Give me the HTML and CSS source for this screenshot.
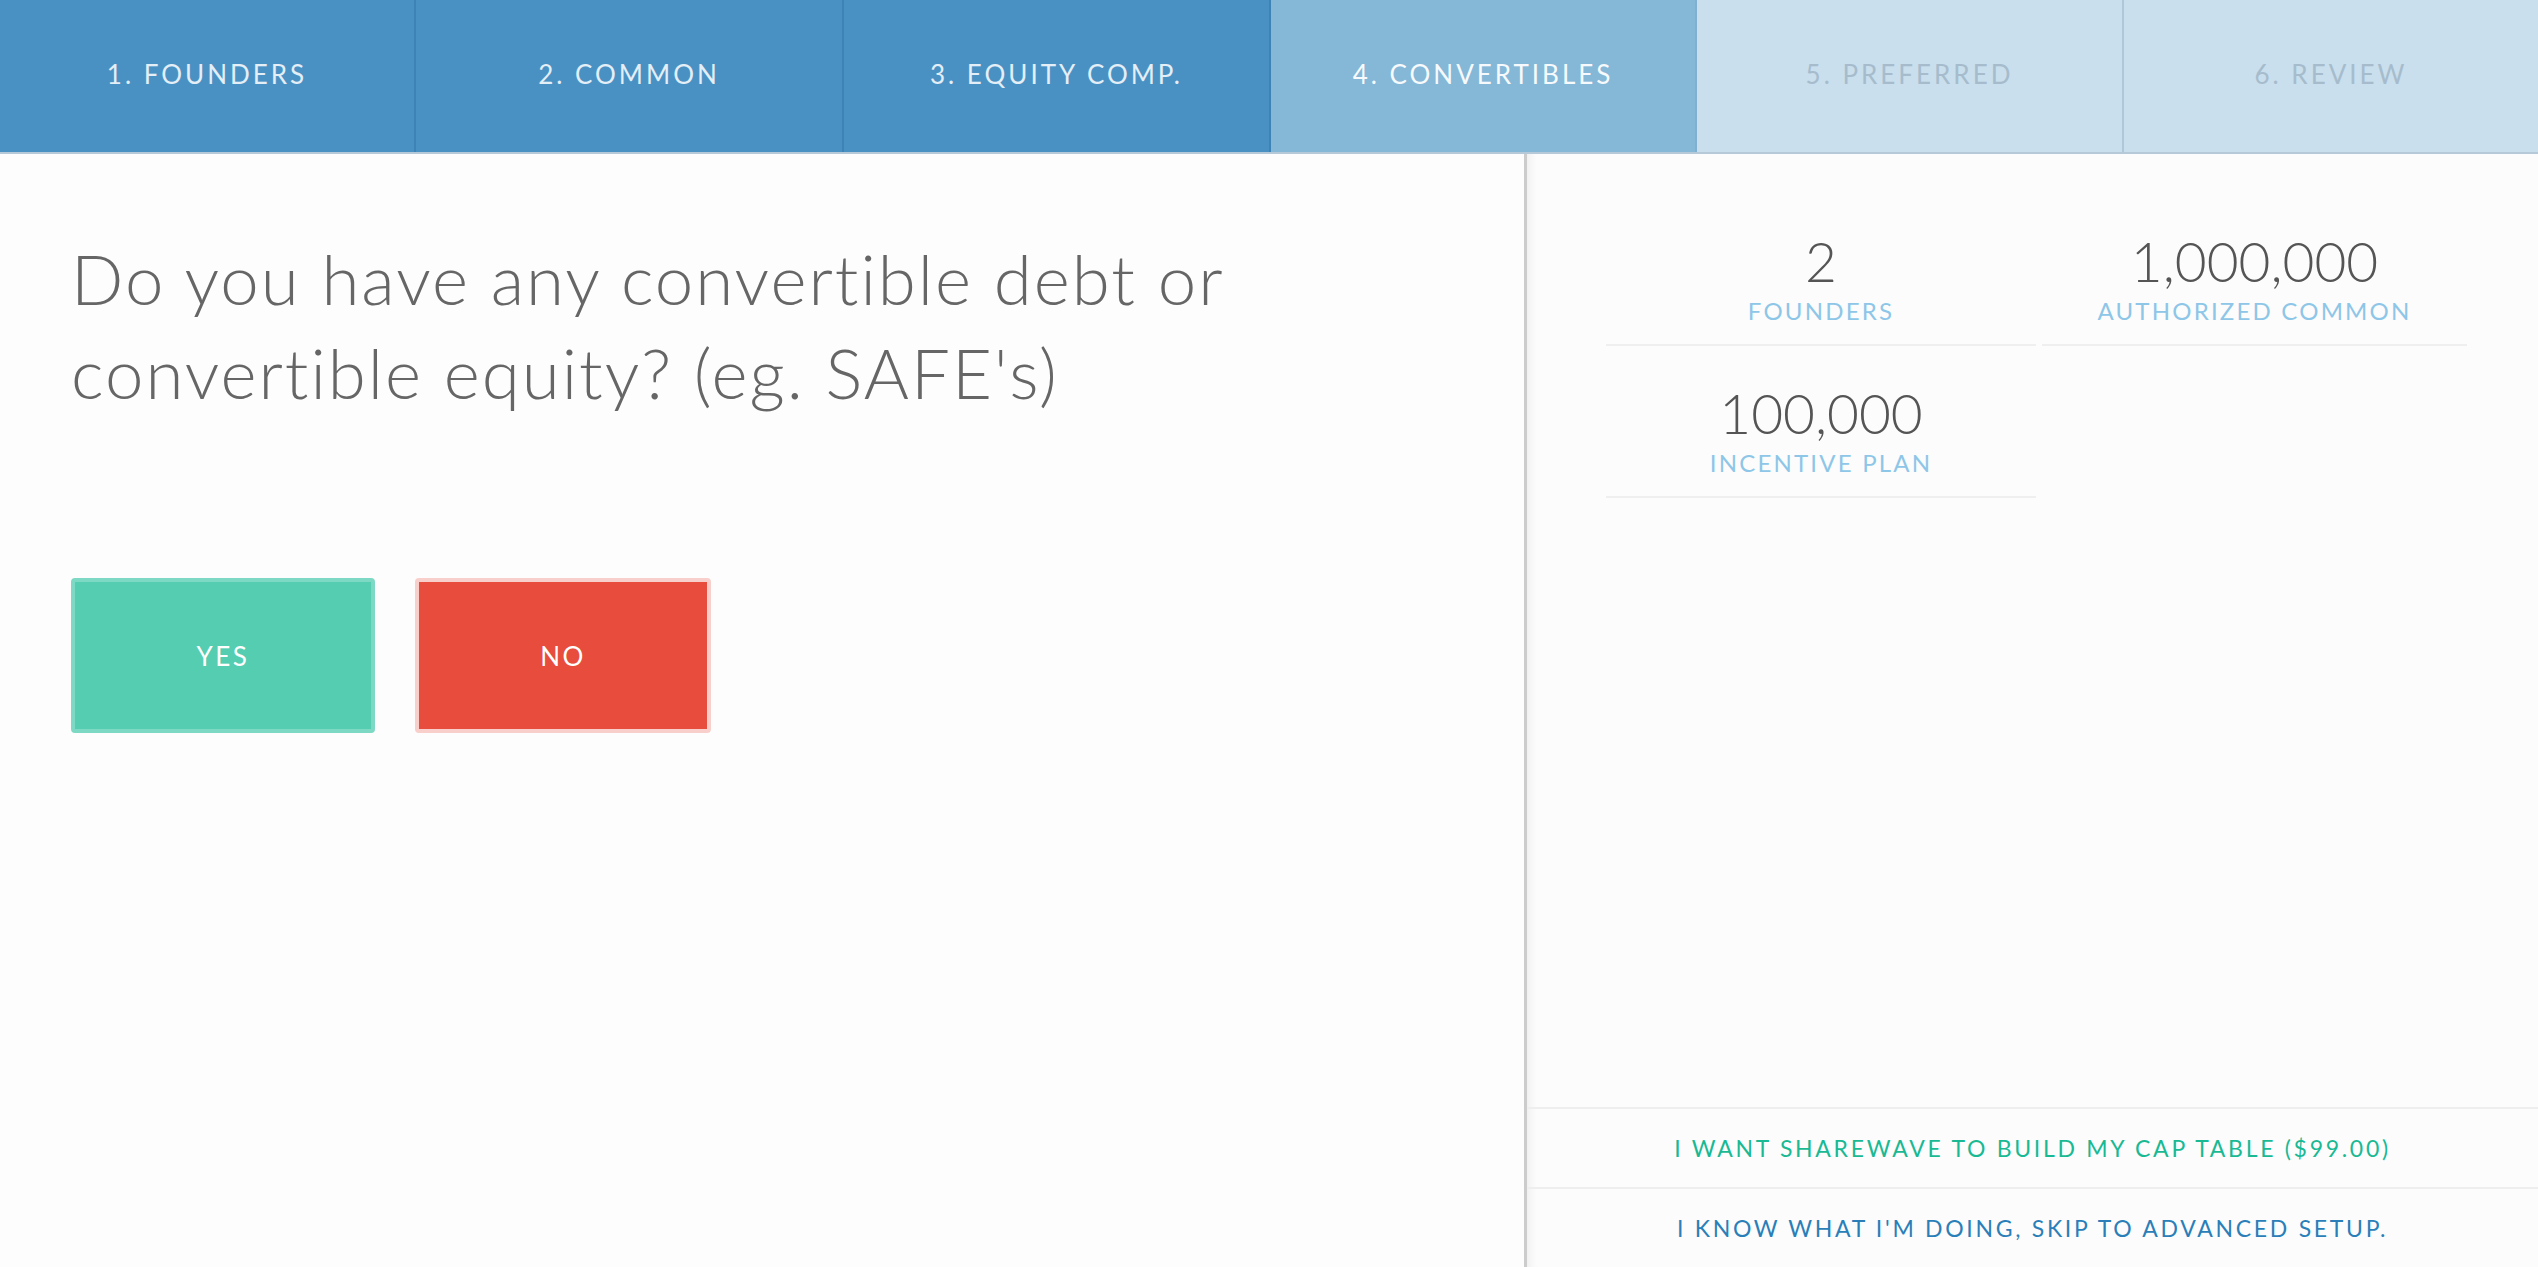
FILE: index.html
```html
<!DOCTYPE html>
<html lang="en">
<head>
<meta charset="utf-8">
<title>Convertibles</title>
<link rel="stylesheet" href="styles.css">
</head>
<body>
<nav class="steps">
  <div class="step done">1. FOUNDERS</div>
  <div class="step done">2. COMMON</div>
  <div class="step done">3. EQUITY COMP.</div>
  <div class="step current">4. CONVERTIBLES</div>
  <div class="step future">5. PREFERRED</div>
  <div class="step future">6. REVIEW</div>
</nav>
<main class="main">
  <section class="question">
    <h1 class="question-title">Do you have any convertible debt or<br>convertible equity? (eg. SAFE's)</h1>
    <div class="answers">
      <button class="answer yes">YES</button>
      <button class="answer no">NO</button>
    </div>
  </section>
  <aside class="summary">
    <div class="stats">
      <div class="stat">
        <div class="stat-value">2</div>
        <div class="stat-label">FOUNDERS</div>
      </div>
      <div class="stat">
        <div class="stat-value">1,000,000</div>
        <div class="stat-label">AUTHORIZED COMMON</div>
      </div>
      <div class="stat">
        <div class="stat-value">100,000</div>
        <div class="stat-label">INCENTIVE PLAN</div>
      </div>
    </div>
    <div class="links">
      <a class="link build">I WANT SHAREWAVE TO BUILD MY CAP TABLE ($99.00)</a>
      <a class="link skip">I KNOW WHAT I'M DOING, SKIP TO ADVANCED SETUP.</a>
    </div>
  </aside>
</main>
</body>
</html>
```
FILE: styles.css
```css
* { box-sizing: border-box; }
html, body { margin: 0; padding: 0; }
body {
  font-family: Lato, "Liberation Sans", sans-serif;
  background: #fdfdfd;
  width: 2538px;
  height: 1267px;
  overflow: hidden;
  display: flex;
  flex-direction: column;
}

.steps {
  display: grid;
  grid-template-columns: 414px 428px 427px 426px 427px 1fr;
  height: 154px;
  border-bottom: 2px solid #b5c9d8;
  flex: none;
}
.step {
  display: flex;
  align-items: center;
  justify-content: center;
  font-size: 26px;
  font-weight: 400;
  letter-spacing: 3px;
  padding-bottom: 4px;
}
.step.done {
  background: #4a91c3;
  color: #e3eef7;
  border-left: 2px solid #3e83b6;
}
.step.done:first-child { border-left: none; }
.step.current {
  background: #85b7d7;
  color: #f7fafc;
  border-left: 2px solid #3e83b6;
}
.step.future {
  background: #c9dfed;
  color: #a6bccc;
  border-left: 2px solid #afc8d9;
}
.step.current + .step.future { border-left: 2px solid #7fb0d2; }

.main {
  flex: 1;
  display: flex;
  min-height: 0;
}
.question {
  width: 1524px;
  flex: none;
  padding: 78px 0 0 71px;
  background: #fdfdfd;
}
.question-title {
  margin: 0;
  font-size: 69px;
  font-weight: 300;
  line-height: 94px;
  color: #666;
  letter-spacing: 2px;
}
.answers {
  display: flex;
  gap: 40px;
  margin-top: 158px;
}
.answer {
  height: 155px;
  border: 4px solid;
  border-radius: 4px;
  font-family: inherit;
  font-size: 26px;
  letter-spacing: 2.5px;
  color: #fff;
  padding: 0;
}
.answer.yes {
  width: 304px;
  background: #54cdb1;
  border-color: #7ed9c4;
}
.answer.no {
  width: 296px;
  background: #e74c3c;
  border-color: #f8cfca;
}

.summary {
  flex: 1;
  border-left: 3px solid #cccccc;
  background: #fcfcfc;
  box-shadow: inset 10px 0 10px -8px rgba(0,0,0,0.07);
  display: flex;
  flex-direction: column;
}
.stats {
  display: grid;
  grid-template-columns: 430px 425px;
  column-gap: 6px;
  padding: 40px 0 0 79px;
}
.stat {
  text-align: center;
  padding: 37px 0 19px;
  border-bottom: 2px solid #efefef;
}
.stat-value {
  font-size: 55px;
  font-weight: 300;
  line-height: 60px;
  color: #555;
}
.stat-label {
  margin-top: 6px;
  font-size: 24px;
  line-height: 28px;
  letter-spacing: 2.2px;
  color: #8ec6e8;
}
.links {
  margin-top: auto;
  display: flex;
  flex-direction: column;
}
.link {
  height: 80px;
  border-top: 2px solid #eeeeee;
  display: flex;
  align-items: center;
  justify-content: center;
  font-size: 23px;
  letter-spacing: 2.7px;
  text-decoration: none;
}
.link.build { color: #19b994; }
.link.skip { color: #2a7fb8; }
```
